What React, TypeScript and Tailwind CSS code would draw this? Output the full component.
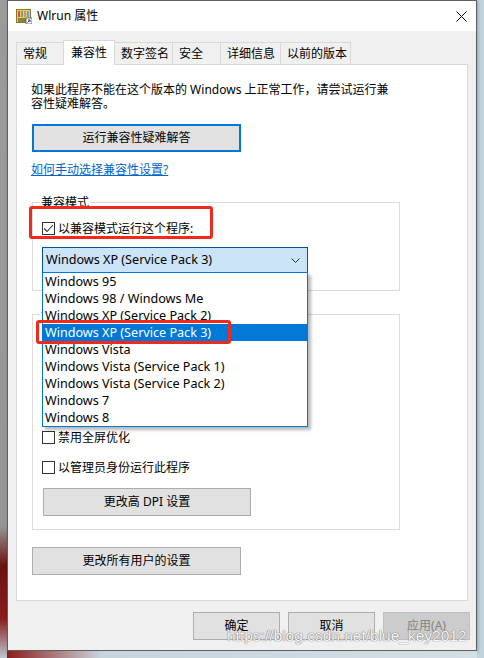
import React from 'react';

const osList = [
  'Windows 95',
  'Windows 98 / Windows Me',
  'Windows XP (Service Pack 2)',
  'Windows XP (Service Pack 3)',
  'Windows Vista',
  'Windows Vista (Service Pack 1)',
  'Windows Vista (Service Pack 2)',
  'Windows 7',
  'Windows 8',
];

const tabs = [
  { label: '常规', w: 'w-[48px]' },
  { label: '兼容性', w: 'w-[52px]', active: true },
  { label: '数字签名', w: 'w-[59px]' },
  { label: '安全', w: 'w-[49px]' },
  { label: '详细信息', w: 'w-[61px]' },
  { label: '以前的版本', w: 'w-[71px]' },
];

function CheckBox({ checked, label }: { checked?: boolean; label: string }) {
  return (
    <div className="flex h-[13px] items-center gap-[3px]">
      <span className="flex h-[13px] w-[13px] shrink-0 items-center justify-center border border-[#333333] bg-white">
        {checked && (
          <svg width="11" height="9" viewBox="0 0 11 9">
            <path d="M1 4.5 L4 7.5 L10 1" fill="none" stroke="#333333" strokeWidth="1.1" />
          </svg>
        )}
      </span>
      <span className="whitespace-nowrap leading-[13px]">{label}</span>
    </div>
  );
}

function Btn({ children, className = '' }: { children: React.ReactNode; className?: string }) {
  return (
    <div
      className={`flex h-[28px] items-center justify-center border border-[#adadad] bg-[#e1e1e1] text-[12px] ${className}`}
    >
      {children}
    </div>
  );
}

function AppIcon() {
  return (
    <svg width="16" height="15" viewBox="0 0 16 15">
      <rect x="0.5" y="0.5" width="14" height="13" fill="#e6d24c" stroke="#8a7a22" />
      <rect x="2" y="2" width="2" height="6" fill="#d94a4a" />
      <rect x="5" y="2" width="2" height="6" fill="#5cb85c" />
      <rect x="8" y="2" width="2" height="6" fill="#e07ab8" />
      <rect x="11" y="2" width="2" height="6" fill="#6a9ad8" />
      <line x1="2" y1="10" x2="13" y2="10" stroke="#333" />
      <line x1="2" y1="12" x2="10" y2="12" stroke="#333" />
      <rect x="10" y="9" width="6" height="6" fill="#ffffff" stroke="#555" strokeWidth="0.8" />
      <path d="M11.5 13.5 L14 11 M12 11 H14 V13" fill="none" stroke="#1a3f8f" strokeWidth="1" />
    </svg>
  );
}

export default function App() {
  return (
    <div className="relative flex h-[658px] w-[484px] overflow-hidden bg-[#c3d3de] font-['Noto_Sans','Noto_Sans_CJK_SC',sans-serif] text-[12px] text-black">
      {/* desktop strip left */}
      <div className="h-full w-[7px] shrink-0 bg-[linear-gradient(180deg,#9b9b9b_0%,#959595_80%,#6a1212_86%,#8b1c1c_94%,#b9c7d0_100%)]" />

      <div className="flex flex-col">
        {/* Window */}
        <div className="flex h-[651px] w-[470px] flex-col border border-[#5f5f5f] bg-[#f0f0f0] shadow-[1px_1px_3px_rgba(0,0,0,0.25)]">
          {/* Title bar */}
          <div className="flex h-[30px] items-center bg-white pl-[8px] pr-[9px]">
            <AppIcon />
            <span className="ml-[5px] leading-[14px]">Wlrun 属性</span>
            <svg className="ml-auto" width="11" height="11" viewBox="0 0 11 11">
              <path d="M0.5 0.5 L10.5 10.5 M10.5 0.5 L0.5 10.5" stroke="#000" strokeWidth="1" />
            </svg>
          </div>

          {/* Body */}
          <div className="flex flex-1 flex-col px-[8px] pt-[9px]">
            {/* Tabs */}
            <div className="flex h-[24px] items-end">
              {tabs.map((t, i) => (
                <div
                  key={t.label}
                  className={`${t.w} flex shrink-0 items-center border-x border-t border-[#d9d9d9] pl-[6px] leading-[14px] ${
                    i > 0 ? '-ml-px' : ''
                  } ${t.active ? 'relative z-10 -mb-px h-[25px] bg-white pl-[7px]' : 'h-[22px] bg-[#f0f0f0]'}`}
                >
                  {t.label}
                </div>
              ))}
            </div>

            {/* Panel */}
            <div className="flex h-[537px] flex-col border border-[#d9d9d9] bg-white pl-[15px]">
              <p className="-ml-px mt-[18px] leading-[14px]">
                如果此程序不能在这个版本的 Windows 上正常工作，请尝试运行兼
                <br />
                容性疑难解答。
              </p>

              <div className="mt-[13px] flex h-[28px] w-[209px] items-center justify-center border-2 border-[#0078d7] bg-[#e1e1e1]">
                运行兼容性疑难解答
              </div>

              <span className="-ml-px mt-[11px] leading-[14px] text-[#0066cc] underline">
                如何手动选择兼容性设置?
              </span>

              {/* Compat mode group */}
              <div className="relative mt-[25px] h-[89px] w-[368px] border border-[#dcdcdc] pl-[9px] pt-[19px]">
                <span className="absolute -top-[7px] left-[7px] bg-white px-px leading-[14px]">兼容模式</span>
                <CheckBox checked label="以兼容模式运行这个程序:" />
                <div className="relative mt-[12px] flex h-[26px] w-[266px] items-center border border-[#005499] bg-[#cce4f7] pl-[3px] pr-[7px]">
                  <span className="text-[12.6px] leading-[14px]">Windows XP (Service Pack 3)</span>
                  <svg className="ml-auto" width="9" height="5" viewBox="0 0 9 5">
                    <path d="M0.5 0.5 L4.5 4.5 L8.5 0.5" fill="none" stroke="#333" strokeWidth="1" />
                  </svg>

                  {/* Open dropdown list */}
                  <div className="absolute -left-px top-[24px] z-20 w-[266px] border border-[#0078d7] bg-white shadow-[3px_3px_3px_rgba(0,0,0,0.28)]">
                    {osList.map((os, i) => (
                      <div
                        key={os}
                        className={`h-[17px] pl-[2px] text-[12.6px] leading-[17px] ${
                          i === 3 ? 'bg-[#0078d7] text-white' : ''
                        }`}
                      >
                        {os}
                      </div>
                    ))}
                  </div>
                </div>
              </div>

              {/* Settings group */}
              <div className="relative mt-[23px] h-[216px] w-[368px] border border-[#dcdcdc] pl-[9px] pt-[116px]">
                <span className="absolute -top-[7px] left-[7px] bg-white px-px leading-[14px]">设置</span>
                <CheckBox label="禁用全屏优化" />
                <div className="mt-[17px]">
                  <CheckBox label="以管理员身份运行此程序" />
                </div>
                <Btn className="ml-px mt-[14px] w-[208px]">更改高 DPI 设置</Btn>
              </div>

              <Btn className="mt-[17px] w-[209px]">更改所有用户的设置</Btn>
            </div>

            {/* Footer buttons */}
            <div className="-mr-[2px] mt-[11px] flex justify-end gap-[8px]">
              <Btn className="w-[87px]">确定</Btn>
              <Btn className="w-[87px]">取消</Btn>
              <div className="flex h-[28px] w-[87px] items-center justify-center border border-[#bfbfbf] bg-[#cccccc] text-[#838383]">
                应用(A)
              </div>
            </div>
          </div>
        </div>
        <div className="h-[7px] bg-[linear-gradient(90deg,#8b1c1c_0%,#c7d4dc_20%,#d4dee5_100%)]" />
      </div>

      {/* Red annotation boxes */}
      <div className="pointer-events-none absolute left-[29px] top-[206px] z-30 h-[33px] w-[184px] rounded-[3px] border-[3px] border-[#f22a1e]" />
      <div className="pointer-events-none absolute left-[36px] top-[320px] z-30 h-[24px] w-[195px] rounded-[3px] border-[3px] border-[#f22a1e]" />

      {/* Watermark */}
      <span className="pointer-events-none absolute left-[227px] top-[627px] z-30 font-['Liberation_Sans',sans-serif] text-[15.5px] leading-[18px] text-[#f6f6f6] [text-shadow:0_0_1px_#6f6f6f,0_0_1px_#6f6f6f]">
        https://blog.csdn.net/blue_key2012
      </span>
    </div>
  );
}
